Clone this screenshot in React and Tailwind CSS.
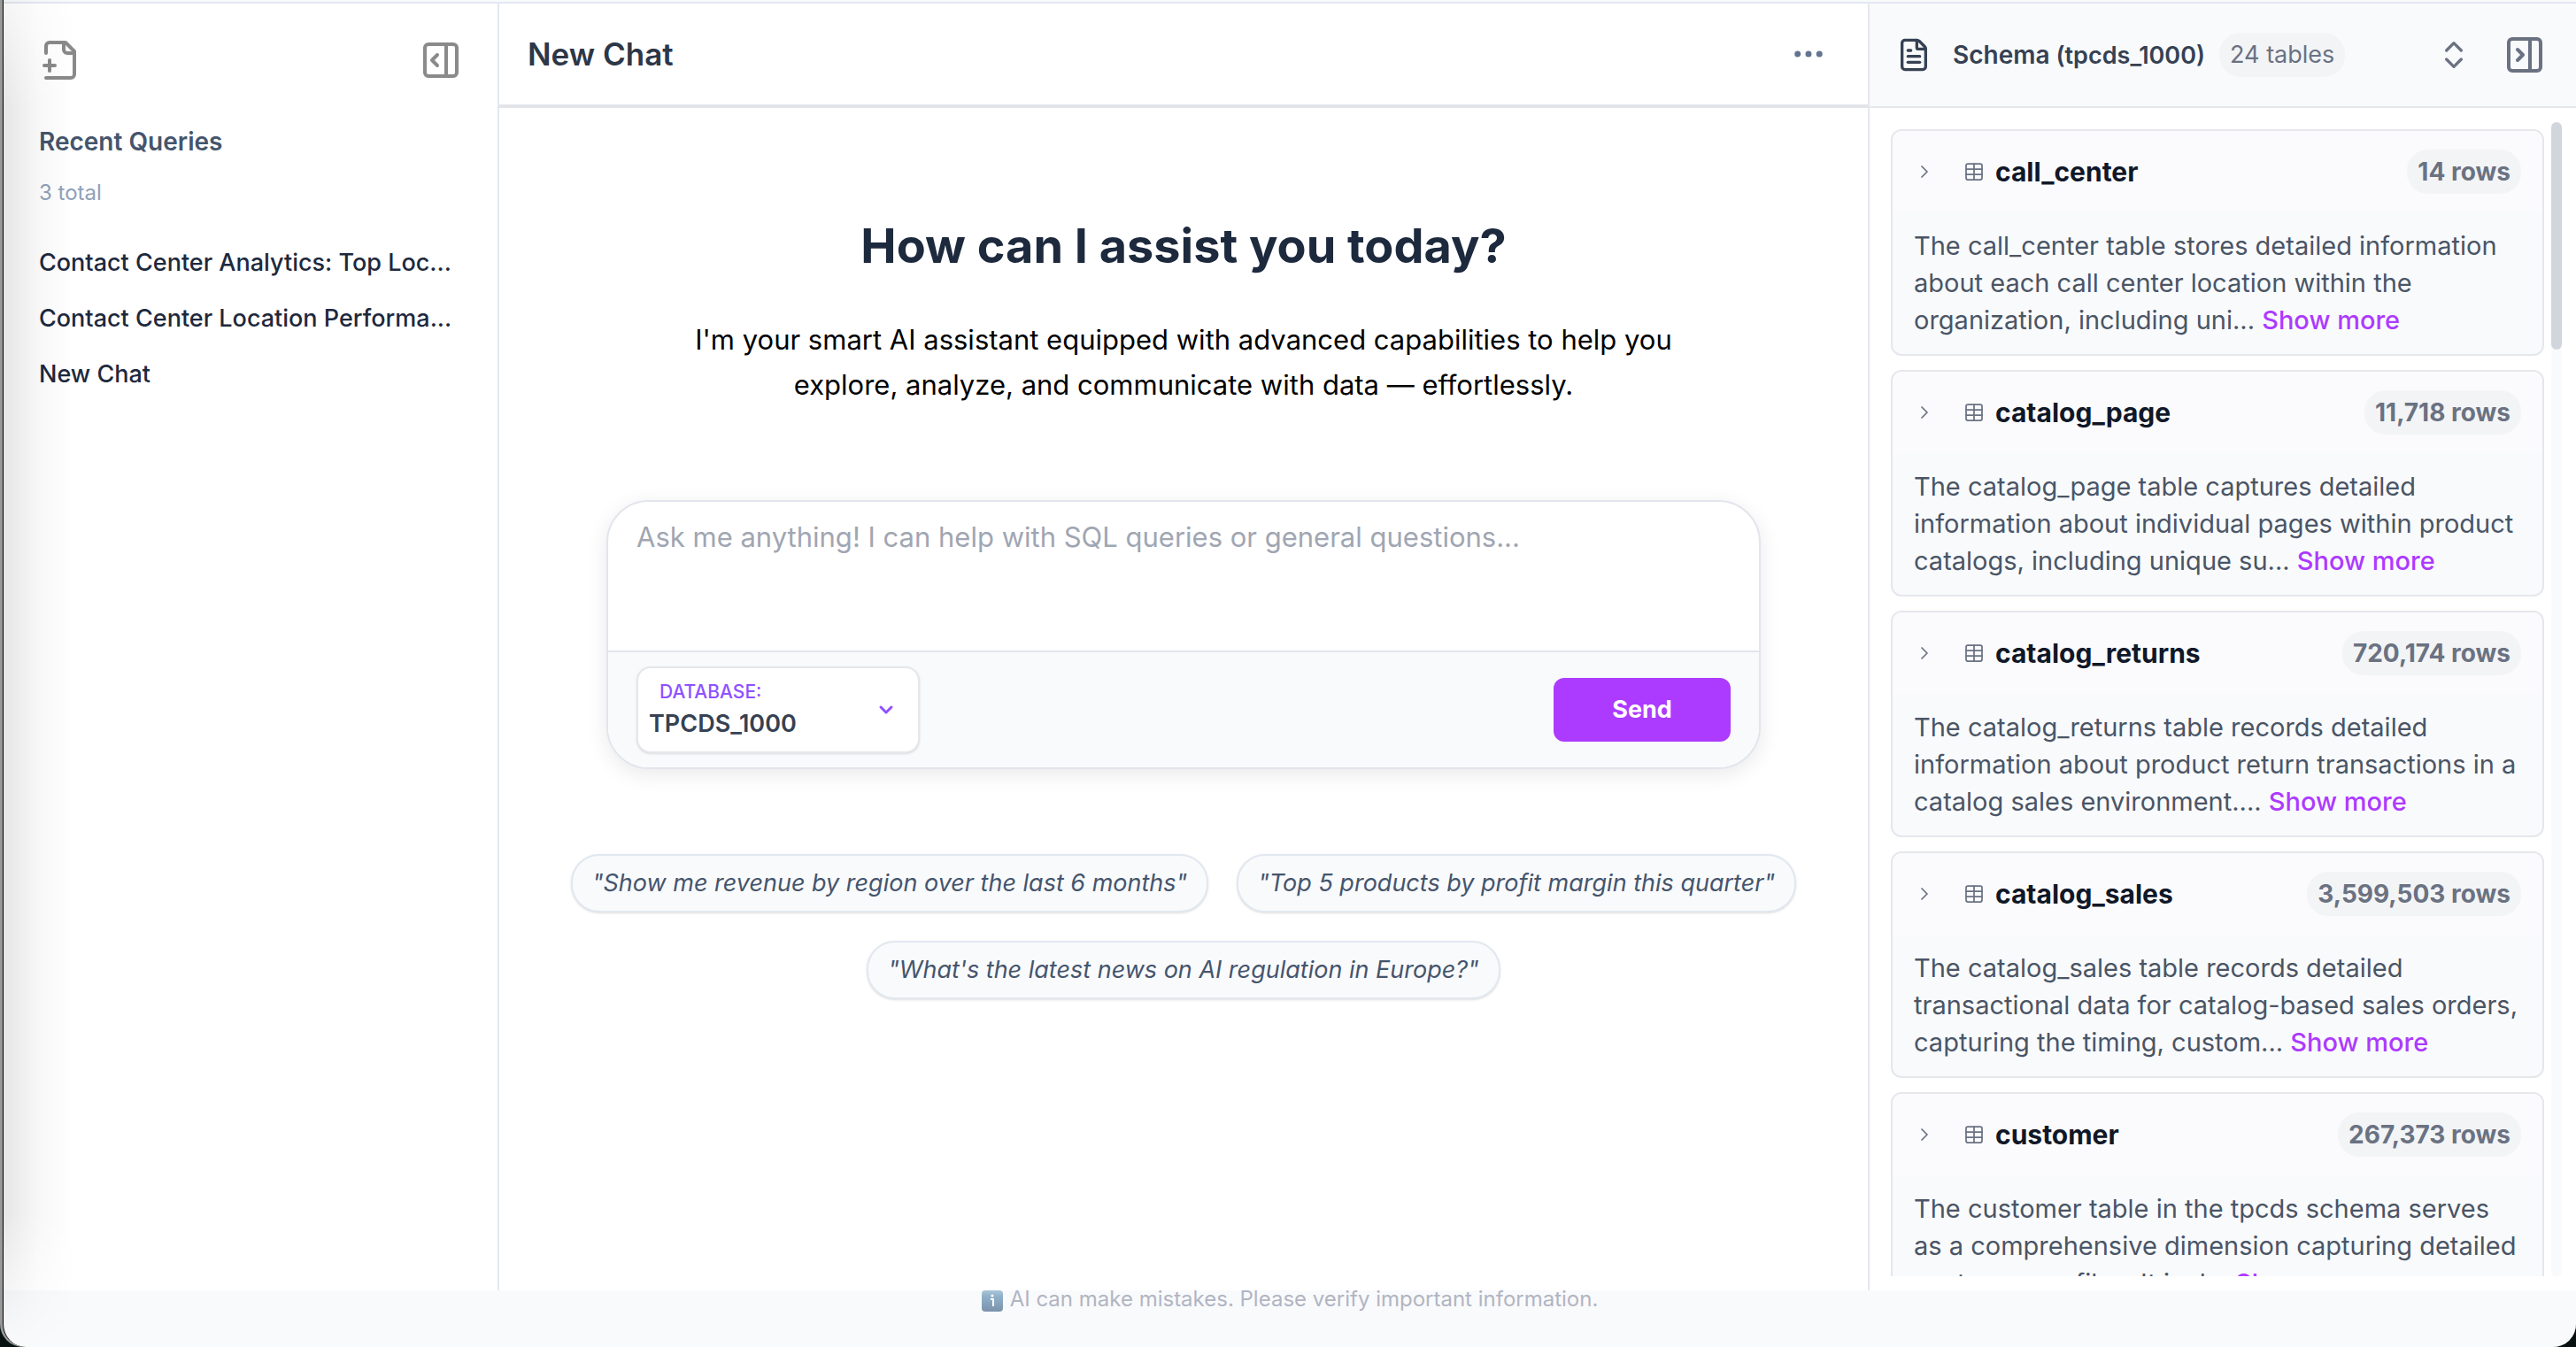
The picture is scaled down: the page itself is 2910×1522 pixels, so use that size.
import React, { useState } from 'react';
import {
  ChevronDown,
  ChevronRight,
  ChevronsUpDown,
  Ellipsis,
  FileText,
  PanelRightClose,
  PanelRightOpen,
  Table,
} from 'lucide-react';

const recentQueries = [
  'Contact Center Analytics: Top Loc...',
  'Contact Center Location Performa...',
  'New Chat',
];

const suggestions = [
  '"Show me revenue by region over the last 6 months"',
  '"Top 5 products by profit margin this quarter"',
  '"What\'s the latest news on AI regulation in Europe?"',
];

const tables = [
  {
    name: 'call_center',
    rows: '14',
    description:
      'The call_center table stores detailed information about each call center location within the organization, including uni...',
  },
  {
    name: 'catalog_page',
    rows: '11,718',
    description:
      'The catalog_page table captures detailed information about individual pages within product catalogs, including unique su...',
  },
  {
    name: 'catalog_returns',
    rows: '720,174',
    description:
      'The catalog_returns table records detailed information about product return transactions in a catalog sales environment....',
  },
  {
    name: 'catalog_sales',
    rows: '3,599,503',
    description:
      'The catalog_sales table records detailed transactional data for catalog-based sales orders, capturing the timing, custom...',
  },
  {
    name: 'customer',
    rows: '267,373',
    description:
      'The customer table in the tpcds schema serves as a comprehensive dimension capturing detailed customer profiles. It incl...',
  },
];

const NewChatIcon = () => (
  <svg
    className="w-12 h-12"
    viewBox="0 0 24 24"
    fill="none"
    stroke="currentColor"
    strokeWidth="2"
    strokeLinecap="round"
    strokeLinejoin="round"
  >
    <path d="M4 22h14a2 2 0 0 0 2-2V7l-5-5H6a2 2 0 0 0-2 2v4" />
    <path d="M14 2v4a2 2 0 0 0 2 2h4" />
    <path d="M3 15h6" />
    <path d="M6 12v6" />
  </svg>
);

const InfoIcon = () => (
  <svg className="w-6 h-6" viewBox="0 0 24 24">
    <defs>
      <linearGradient id="info" x1="0" y1="0" x2="0" y2="1">
        <stop offset="0" stopColor="#a9c6da" />
        <stop offset="0.3" stopColor="#8fb0c8" />
        <stop offset="1" stopColor="#7b92ab" />
      </linearGradient>
    </defs>
    <rect width="24" height="24" rx="4" fill="url(#info)" />
    <circle cx="12" cy="6" r="1.6" fill="#fff" />
    <path d="M10 10h3v8" fill="none" stroke="#fff" strokeWidth="2" />
  </svg>
);

const Sidebar = () => (
  <aside className="w-[560px] shrink-0 border-r-2 border-slate-200 bg-white px-10 pt-10">
    <div className="flex items-center justify-between text-[#8a8a8a]">
      <button aria-label="New chat">
        <NewChatIcon />
      </button>
      <button aria-label="Collapse sidebar">
        <PanelRightOpen className="w-12 h-12" />
      </button>
    </div>

    <h2 className="mt-12 text-[28px] leading-10 font-semibold text-slate-600">Recent Queries</h2>
    <p className="mt-[22px] text-[24px] leading-8 text-slate-400">3 total</p>

    <ul className="mt-8">
      {recentQueries.map((query) => (
        <li key={query}>
          <button className="block h-[63px] w-full text-left text-[27px] font-medium whitespace-nowrap text-slate-800">
            {query}
          </button>
        </li>
      ))}
    </ul>
  </aside>
);

const ChatInput = () => {
  const [message, setMessage] = useState('');

  return (
    <form
      onSubmit={(e) => e.preventDefault()}
      className="mt-[105px] w-full max-w-[1304px] overflow-hidden rounded-[48px] border-2 border-[#e2e5ec] bg-white shadow-[0_6px_24px_rgba(0,0,0,0.09)]"
    >
      <textarea
        aria-label="Message"
        value={message}
        onChange={(e) => setMessage(e.target.value)}
        placeholder="Ask me anything! I can help with SQL queries or general questions..."
        className="block h-[168px] w-full resize-none px-8 pt-4 text-[31px] leading-[48px] text-gray-800 outline-none placeholder:text-[#a0a6b2]"
      />
      <div className="flex items-center justify-between border-t-2 border-[#e2e5ec] bg-[#f9fafc] px-8 py-4">
        <div className="relative w-80 rounded-2xl border-2 border-gray-200 bg-white pt-[13px] pb-[9px] shadow-sm">
          <label htmlFor="database" className="block pl-6 text-[21px] leading-7 font-medium text-violet-500">
            DATABASE:
          </label>
          <select
            id="database"
            className="block h-11 w-full appearance-none bg-transparent pl-3 text-[27px] font-semibold text-gray-700 outline-none"
          >
            <option>TPCDS_1000</option>
          </select>
          <ChevronDown
            className="pointer-events-none absolute top-1/2 right-6 h-6 w-6 -translate-y-1/2 text-violet-500"
            strokeWidth={3}
          />
        </div>
        <button type="submit" className="h-[72px] w-[200px] rounded-xl bg-[#ad3aff] text-[27px] font-bold text-white">
          Send
        </button>
      </div>
    </form>
  );
};

const Chat = () => (
  <main className="flex min-w-0 flex-1 flex-col bg-white">
    <header className="flex h-[118px] items-center justify-between border-b-4 border-[#e2e4e9] px-8">
      <h1 className="text-[35px] font-semibold text-[#2d3748]">New Chat</h1>
      <button aria-label="Chat options" className="pr-3.5 text-slate-500">
        <Ellipsis className="h-[42px] w-[42px]" />
      </button>
    </header>

    <section className="flex flex-col items-center px-8 pt-[124px]">
      <h2 className="text-[54px] leading-[64px] font-bold text-slate-800">How can I assist you today?</h2>
      <p className="mt-12 max-w-[1140px] text-center text-[31px] leading-[51px] text-black">
        I'm your smart AI assistant equipped with advanced capabilities to help you explore, analyze, and communicate
        with data — effortlessly.
      </p>

      <ChatInput />

      <div className="mt-24 flex flex-wrap justify-center gap-8">
        {suggestions.map((text) => (
          <button
            key={text}
            className="rounded-[32px] border-2 border-slate-200 bg-[#f9fafc] px-[22px] py-[10px] text-[27px] leading-[42px] text-slate-600 italic shadow-sm"
          >
            {text}
          </button>
        ))}
      </div>
    </section>
  </main>
);

const TableCard = ({ table }) => (
  <li className="shrink-0 overflow-hidden rounded-xl border-2 border-gray-200 bg-[#f9fafc]">
    <div className="flex h-[92px] items-center bg-[#fbfbfd] px-6">
      <button aria-label={`Expand ${table.name}`} className="text-gray-500">
        <ChevronRight className="w-6 h-6" strokeWidth={1.75} />
      </button>
      <Table className="ml-8 w-6 h-6 text-gray-500" strokeWidth={1.75} />
      <h3 className="ml-3 text-[30px] font-bold text-gray-900">{table.name}</h3>
      <span className="ml-auto rounded-3xl bg-gray-100 px-3 py-1 text-[28px] leading-[42px] font-bold text-gray-500">
        {table.rows} rows
      </span>
    </div>
    <p className="px-6 py-[17px] text-[29px] leading-[42px] text-gray-600">
      {table.description} <button className="font-medium text-[#ad3aff]">Show more</button>
    </p>
  </li>
);

const SchemaPanel = () => (
  <aside className="flex w-[800px] shrink-0 flex-col border-l-2 border-gray-200 bg-white">
    <header className="flex h-[118px] shrink-0 items-center border-b-2 border-gray-200 bg-slate-50 pr-[34px] pl-[30px]">
      <FileText className="h-10 w-10 text-gray-700" />
      <h2 className="ml-6 flex items-baseline gap-[7px] text-[28px] font-semibold text-gray-700">
        Schema <span className="text-[27px]">(tpcds_1000)</span>
      </h2>
      <span className="ml-4 rounded-3xl bg-gray-100 px-3 py-1 text-[27px] leading-[42px] text-gray-500">24 tables</span>
      <button aria-label="Expand all tables" className="ml-auto text-gray-500">
        <ChevronsUpDown className="h-10 w-10" />
      </button>
      <button aria-label="Collapse schema panel" className="ml-9 text-gray-500">
        <PanelRightClose className="w-12 h-12" />
      </button>
    </header>

    <div className="flex min-h-0 flex-1 p-4">
      <ul className="flex min-w-0 flex-1 flex-col gap-4 overflow-hidden p-2">
        {tables.map((table) => (
          <TableCard key={table.name} table={table} />
        ))}
      </ul>
      {/* Scrollbar */}
      <div className="w-3 rounded-full bg-slate-50">
        <div className="h-[257px] rounded-full bg-gray-300" />
      </div>
    </div>
  </aside>
);

const App = () => (
  <div className="h-screen bg-[#07110f] font-[Inter,sans-serif]">
    <div className="h-full rounded-b-[26px] bg-[#989898] pl-[3px]">
      <div className="relative flex h-full flex-col overflow-hidden rounded-b-[26px] border-l border-black bg-[#f9fafc]">
        <div className="h-1 shrink-0 border-b-2 border-slate-200 bg-slate-50" />
        <div className="flex min-h-0 flex-1">
          <Sidebar />
          <Chat />
          <SchemaPanel />
        </div>
        <footer className="flex h-16 shrink-0 items-start justify-center gap-2 text-[24px] leading-5 text-[#b1b5c2]">
          <InfoIcon />
          <p>AI can make mistakes. Please verify important information.</p>
        </footer>

        {/* Shade along the left window edge */}
        <div className="pointer-events-none absolute inset-y-0 left-0 w-20 bg-linear-to-r from-black/10 via-black/3 to-transparent [mask-image:linear-gradient(to_bottom,rgba(0,0,0,0.4),black_8%,black_90%,transparent)]" />
      </div>
    </div>
  </div>
);

export default App;
